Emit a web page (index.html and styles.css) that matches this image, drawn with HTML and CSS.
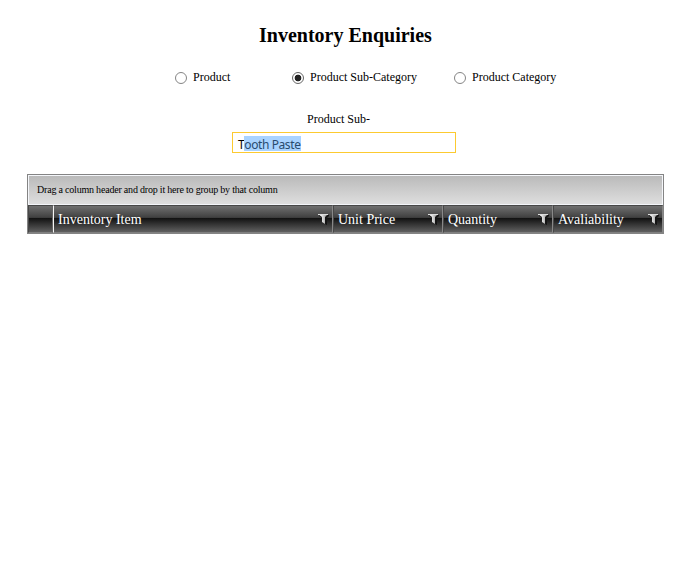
FILE: index.html
```html
<!DOCTYPE html>
<html lang="en">
<head>
<meta charset="utf-8">
<title>Inventory Enquiries</title>
<link rel="stylesheet" href="styles.css">
</head>
<body>
<svg class="defs" aria-hidden="true">
  <defs>
    <linearGradient id="metal" x1="0" x2="1" y1="0" y2="0"><stop offset=".3" stop-color="#f4f4f4"/><stop offset="1" stop-color="#888"/></linearGradient>
    <symbol id="funnel" viewBox="0 0 12 12">
      <path d="M1 1h10v1L9 4v7L5 9V4L1 2z" fill="#151515"/>
      <path d="M0 0h10L7 3v7L4 8V3z" fill="url(#metal)"/>
      <path d="M0 .5h10" stroke="#ddd"/>
    </symbol>
  </defs>
</svg>
<h1 class="title">Inventory Enquiries</h1>
<div class="options" role="radiogroup">
  <div class="option"><span class="radio"></span><span class="caption">Product</span></div>
  <div class="option"><span class="radio checked"></span><span class="caption">Product Sub-Category</span></div>
  <div class="option"><span class="radio"></span><span class="caption">Product Category</span></div>
</div>
<div class="field-label">Product Sub-</div>
<div class="field">T<span class="selected">ooth Paste</span></div>
<div class="grid">
  <div class="group-panel">Drag a column header and drop it here to group by that column</div>
  <div class="header">
    <div class="cell indicator"></div>
    <div class="cell"><span>Inventory Item</span><svg class="filter"><use href="#funnel"/></svg></div>
    <div class="cell"><span>Unit Price</span><svg class="filter"><use href="#funnel"/></svg></div>
    <div class="cell"><span>Quantity</span><svg class="filter"><use href="#funnel"/></svg></div>
    <div class="cell"><span>Avaliability</span><svg class="filter"><use href="#funnel"/></svg></div>
  </div>
</div>
</body>
</html>
```
FILE: styles.css
```css
* { box-sizing: border-box; }
body { margin: 0; background: #fff; color: #000; font-family: "Liberation Serif", serif; font-size: 12px; }
.defs { display: block; width: 0; height: 0; }
.title { margin: 23px 0 0 259px; font-size: 20px; line-height: 24px; font-weight: bold; white-space: nowrap; }
.options { display: grid; grid-template-columns: 117px 162px 120px; margin: 22px 0 0 175px; height: 18px; }
.option { display: flex; align-items: flex-start; white-space: nowrap; line-height: 16px; }
.radio { flex: none; width: 12px; height: 12px; margin: 3px 6px 0 0; border: 1px solid #858585; border-radius: 50%; background: #fff; }
.checked { border-color: #666; background: radial-gradient(circle, #222 0 3px, #fff 3.7px); }
.field-label { margin: 24px 0 0 307px; line-height: 16px; }
.field { width: 224px; height: 21px; margin: 5px 0 0 232px; padding: 3px 0 0 5px; border: 1px solid #fcca30; font: 12px/17px "Noto Sans", sans-serif; letter-spacing: -0.4px; white-space: nowrap; }
.selected { display: inline-block; height: 15px; vertical-align: top; background: #a9d3ff; color: #284b6e; }
.grid { width: 637px; height: 60px; margin: 21px 0 0 27px; border: 1px solid #848484; }
.group-panel { height: 30px; padding: 0 0 0 8px; border: 1px solid #f4f6fa; background: linear-gradient(#bababa, #dedede); font-size: 10px; line-height: 28px; letter-spacing: -0.2px; white-space: nowrap; }
.header { display: grid; grid-template-columns: 25px 280px 110px 110px 110px; height: 28px; background: #858585; }
.cell { display: flex; align-items: center; justify-content: space-between; padding: 1px 2px 0 4px; border: 1px solid #484848; border-right-color: #888; border-bottom-color: #808080; background: linear-gradient(#707070 0, #404040 44%, #121212 47%, #1c1c1c 54%, #606060 100%); color: #fff; font-size: 14px; white-space: nowrap; }
.indicator { border-right-color: #666; }
.indicator + .cell { border-left-color: #f4f4f4; }
.filter { width: 12px; height: 12px; }
```
